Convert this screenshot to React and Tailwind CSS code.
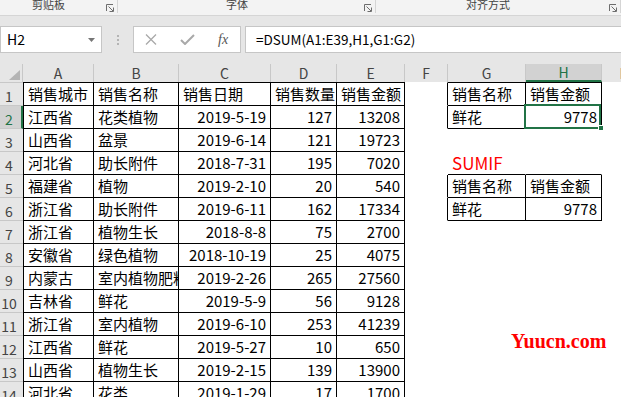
import React from "react";

// column widths include the right border pixel
const cols = [
  { key: "A", w: "w-[71px]" },
  { key: "B", w: "w-[85px]" },
  { key: "C", w: "w-[92px]" },
  { key: "D", w: "w-[66px]" },
  { key: "E", w: "w-[68px]" },
  { key: "F", w: "w-[43px]" },
  { key: "G", w: "w-[78px]" },
  { key: "H", w: "w-[76px]" },
  { key: "I", w: "w-[40px]" },
];

const rows = [
  ["销售城市", "销售名称", "销售日期", "销售数量", "销售金额", "", "销售名称", "销售金额"],
  ["江西省", "花类植物", "2019-5-19", "127", "13208", "", "鲜花", "9778"],
  ["山西省", "盆景", "2019-6-14", "121", "19723"],
  ["河北省", "助长附件", "2018-7-31", "195", "7020", "", "SUMIF"],
  ["福建省", "植物", "2019-2-10", "20", "540", "", "销售名称", "销售金额"],
  ["浙江省", "助长附件", "2019-6-11", "162", "17334", "", "鲜花", "9778"],
  ["浙江省", "植物生长", "2018-8-8", "75", "2700"],
  ["安徽省", "绿色植物", "2018-10-19", "25", "4075"],
  ["内蒙古", "室内植物肥料", "2019-2-26", "265", "27560"],
  ["吉林省", "鲜花", "2019-5-9", "56", "9128"],
  ["浙江省", "室内植物", "2019-6-10", "253", "41239"],
  ["江西省", "鲜花", "2019-5-27", "10", "650"],
  ["山西省", "植物生长", "2019-2-15", "139", "13900"],
  ["河北省", "花类", "2019-1-29", "17", "1700"],
];

// bordered ranges: A1:E.., G1:H2, G5:H6
const inTable = (r, c) =>
  c <= 4 || ((c === 6 || c === 7) && [1, 2, 5, 6].includes(r));

const Launcher = ({ className }) => (
  <svg className={className} width="8" height="8" viewBox="0 0 8 8" fill="none" stroke="#6d6d6d" strokeWidth="1">
    <path d="M0.5 7V0.5H7" />
    <path d="M2.5 2.5L7 7" />
    <path d="M3.5 7.5H7.5V3.5" />
  </svg>
);

const Cell = ({ r, c, col, value }) => {
  const inT = inTable(r, c);
  const rBlack = inT || inTable(r, c + 1);
  const bBlack = inT || inTable(r + 1, c);
  const right = /^[\d-]+$/.test(value || "");
  const red = value === "SUMIF";
  return (
    <div
      className={`${col.w} shrink-0 h-full border-r border-b ${
        rBlack ? "border-r-black" : "border-r-transparent"
      } ${bBlack ? "border-b-black" : "border-b-transparent"} ${
        r === 1 ? (inT ? "border-t border-t-black" : "border-t border-t-transparent") : ""
      } ${c === 0 ? "border-l border-l-black" : ""} px-[4px] overflow-hidden whitespace-nowrap leading-[21px] ${
        right ? "text-right" : "text-left"
      } ${red ? "text-[#ff0000] text-[17px]" : "text-[15px] text-black"}`}
    >
      {value}
    </div>
  );
};

export default function App() {
  return (
    <div className="w-[621px] h-[397px] overflow-hidden relative bg-white font-['Noto_Sans_CJK_SC',sans-serif]">
      {/* ribbon group labels */}
      <div className="h-[16px] bg-[#f3f3f3] border-b border-[#d5d5d5] flex text-[11px] text-[#444] overflow-hidden">
        <div className="w-[117px] flex pl-[32px]">
          <span className="leading-none -mt-[1px]">剪贴板</span>
          <Launcher className="ml-auto mr-[3px] mt-[4px]" />
        </div>
        <div className="w-[1px] h-[13px] bg-[#d5d5d5]" />
        <div className="w-[257px] flex pl-[108px]">
          <span className="leading-none -mt-[1px]">字体</span>
          <Launcher className="ml-auto mr-[3px] mt-[4px]" />
        </div>
        <div className="w-[1px] h-[13px] bg-[#d5d5d5]" />
        <div className="flex-1 flex pl-[90px]">
          <span className="leading-none -mt-[1px]">对齐方式</span>
          <Launcher className="ml-auto mr-[3px] mt-[4px]" />
          <div className="w-[1px] h-[13px] bg-[#d5d5d5]" />
        </div>
      </div>

      {/* formula bar */}
      <div className="h-[48px] bg-[#e6e6e6] pt-[10px] flex">
        <div className="w-[102px] h-[27px] bg-white border border-[#c6c6c6] flex items-center pl-[6px]">
          <span className="text-[14px] text-black">H2</span>
          <svg className="ml-auto mr-[6px]" width="7" height="4" viewBox="0 0 7 4">
            <path d="M0 0H7L3.5 4Z" fill="#767676" />
          </svg>
        </div>
        <div className="w-[31px] h-[27px] flex flex-col items-center justify-center gap-[2px]">
          <div className="w-[2px] h-[2px] bg-[#b4b4b4]" />
          <div className="w-[2px] h-[2px] bg-[#b4b4b4]" />
          <div className="w-[2px] h-[2px] bg-[#b4b4b4]" />
        </div>
        <div className="w-[108px] h-[27px] bg-white border border-[#c6c6c6] flex items-center pl-[11px]">
          <svg width="12" height="11" viewBox="0 0 12 11" fill="none" stroke="#a9a9a9" strokeWidth="1.3">
            <path d="M1 0.5L11 10.5M11 0.5L1 10.5" />
          </svg>
          <svg className="ml-[23px]" width="15" height="11" viewBox="0 0 15 11" fill="none" stroke="#a9a9a9" strokeWidth="2">
            <path d="M1 6L5 10L14 1" />
          </svg>
          <span className="ml-[23px] font-['Liberation_Serif',serif] italic text-[14px] text-[#555] leading-none">fx</span>
        </div>
        <div className="ml-[4px] flex-1 h-[27px] bg-white border border-r-0 border-[#c6c6c6] flex items-center pl-[10px] text-[13.5px] text-black whitespace-nowrap">
          =DSUM(A1:E39,H1,G1:G2)
        </div>
      </div>

      {/* sheet */}
      <div className="flex flex-col">
        {/* column headers */}
        <div className="flex h-[18px]">
          <div className="w-[23px] shrink-0 h-full bg-[#e6e6e6] border-r border-[#c8c8c8] flex items-end justify-end pr-[2px] pb-[2px]">
            <svg width="11" height="10" viewBox="0 0 11 10">
              <path d="M11 0V10H0Z" fill="#b4b4b4" />
            </svg>
          </div>
          {cols.map((col) => (
            <div
              key={col.key}
              className={`${col.w} shrink-0 h-full flex items-center justify-center text-[14px] leading-none ${
                col.key === "H"
                  ? "bg-[#d2d2d2] text-[#217346] border-r border-r-[#c8c8c8] border-b-2 border-b-[#217346]"
                  : "bg-[#e6e6e6] text-[#444] border-r border-r-[#c8c8c8]"
              }`}
            >
              {col.key}
            </div>
          ))}
        </div>

        {rows.map((row, i) => {
          const r = i + 1;
          return (
            <div key={r} className={`flex ${r === 1 ? "h-[24px]" : "h-[23px]"}`}>
              <div
                className={`w-[23px] shrink-0 h-full border-b border-b-[#c8c8c8] ${
                  r === 1 ? "border-t border-t-[#c8c8c8]" : ""
                } ${
                  r === 2
                    ? "bg-[#d2d2d2] text-[#217346] border-r-2 border-r-[#217346]"
                    : "bg-[#e6e6e6] text-[#444]"
                } flex items-end`}
              >
                <span className="w-[18px] text-center text-[14px] leading-none pb-[2px]">{r}</span>
              </div>
              {cols.map((col, c) => (
                <Cell key={col.key} r={r} c={c} col={col} value={row[c]} />
              ))}
            </div>
          );
        })}
      </div>

      {/* active cell H2 */}
      <div className="absolute left-[524px] top-[104px] w-[77px] h-[25px] border-2 border-[#217346]" />
      <div className="absolute left-[598px] top-[125px] w-[6px] h-[6px] bg-[#217346] border border-white" />

      {/* watermark */}
      <div className="absolute left-[511px] top-[331px] font-['Liberation_Serif',serif] font-bold text-[20px] leading-none text-[#ff0000]">
        Yuucn.com
      </div>
    </div>
  );
}
